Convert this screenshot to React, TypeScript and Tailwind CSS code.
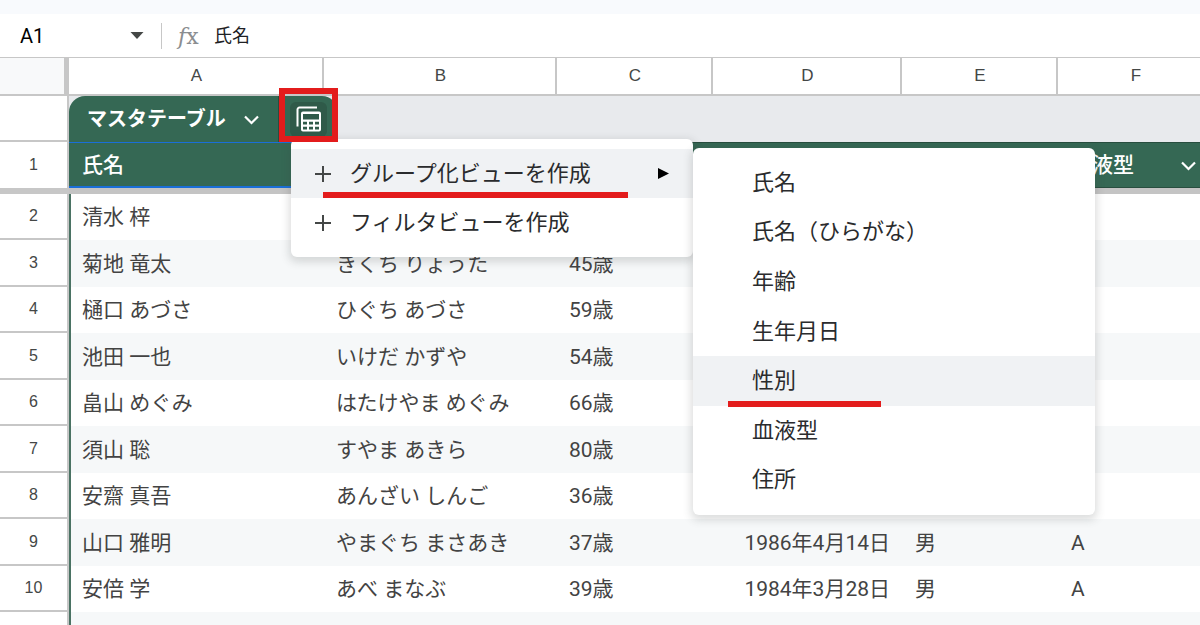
import React from 'react';

const columns = ['A', 'B', 'C', 'D', 'E', 'F'];

const headings = ['氏名', '氏名（ひらがな）', '年齢', '生年月日', '性別', '血液型'];

const rows = [
  { name: '清水 梓', kana: '', age: '', birth: '', sex: '', blood: '' },
  { name: '菊地 竜太', kana: 'きくち りょうた', age: '45歳', birth: '', sex: '', blood: '' },
  { name: '樋口 あづさ', kana: 'ひぐち あづさ', age: '59歳', birth: '', sex: '', blood: '' },
  { name: '池田 一也', kana: 'いけだ かずや', age: '54歳', birth: '', sex: '', blood: '' },
  { name: '畠山 めぐみ', kana: 'はたけやま めぐみ', age: '66歳', birth: '', sex: '', blood: '' },
  { name: '須山 聡', kana: 'すやま あきら', age: '80歳', birth: '', sex: '', blood: '' },
  { name: '安齋 真吾', kana: 'あんざい しんご', age: '36歳', birth: '', sex: '', blood: '' },
  { name: '山口 雅明', kana: 'やまぐち まさあき', age: '37歳', birth: '1986年4月14日', sex: '男', blood: 'A' },
  { name: '安倍 学', kana: 'あべ まなぶ', age: '39歳', birth: '1984年3月28日', sex: '男', blood: 'A' },
  { name: '', kana: '', age: '', birth: '', sex: '', blood: '' },
];

const groupFields = ['氏名', '氏名（ひらがな）', '年齢', '生年月日', '性別', '血液型', '住所'];

const Chevron = () => (
  <svg className="shrink-0 w-[15px] h-[15px]" viewBox="0 0 15 15" fill="none" stroke="currentColor" strokeWidth="2.2">
    <path d="M1 4.5l6.5 6.5L14 4.5" />
  </svg>
);

const Plus = () => (
  <svg className="w-4 h-4" viewBox="0 0 16 16" fill="none" stroke="#444746" strokeWidth="2">
    <path d="M8 0v16M0 8h16" />
  </svg>
);

const TableViewsIcon = () => (
  <svg className="w-[26px] h-[26px]" viewBox="0 0 26 26" fill="currentColor">
    <path d="M1.5 20.5V3.5a2 2 0 0 1 2-2h17.5" fill="none" stroke="currentColor" strokeWidth="2" />
    <path
      fillRule="evenodd"
      d="M7 5.5h16a2 2 0 0 1 2 2v16a2 2 0 0 1-2 2H7a2 2 0 0 1-2-2v-16a2 2 0 0 1 2-2zM7 8v5.5h16V8zM7 15.8v2.8h4v-2.8zM13 15.8v2.8h4v-2.8zM19 15.8v2.8h4v-2.8zM7 20.8v2.8h4v-2.8zM13 20.8v2.8h4v-2.8zM19 20.8v2.8h4v-2.8z"
    />
  </svg>
);

const FormulaBar = () => (
  <div className="flex items-center h-11 border-b border-[#c7c7c7] bg-white">
    <input
      aria-label="名前ボックス"
      defaultValue="A1"
      className="w-[110px] ml-5 text-xl text-black outline-none"
    />
    <button aria-label="名前付き範囲" className="w-[14px] h-6 flex items-center">
      <svg className="w-[14px] h-[7px]" viewBox="0 0 14 7" fill="#444746">
        <path d="M0.5 0h13L7 7z" />
      </svg>
    </button>
    <div className="w-px h-[26px] ml-[17px] bg-[#c7c7c7]" />
    <span className="w-9 ml-4 pt-[2px] font-['DejaVu_Serif',serif] text-[22px] leading-6 text-[#8a8d90]">
      <i>f</i>x
    </span>
    <input
      aria-label="数式バー"
      defaultValue="氏名"
      className="flex-1 min-w-0 text-lg text-[#202124] outline-none"
    />
  </div>
);

const GroupMenu = () => (
  <div
    role="menu"
    className="absolute z-20 left-full -top-px w-[402px] h-[367px] py-[10px] flex flex-col rounded-md bg-white shadow-[0_3px_8px_2px_rgba(60,64,67,0.18)]"
  >
    {groupFields.map((field) => (
      <button
        key={field}
        role="menuitem"
        className={`relative flex-1 flex items-center pl-[59px] text-left ${field === '性別' ? 'bg-[#f0f2f4]' : ''}`}
      >
        {field}
        {field === '性別' && <span className="absolute left-[35px] -bottom-px w-[153px] h-[6px] bg-[#e31c1c]" />}
      </button>
    ))}
  </div>
);

const ViewMenu = () => (
  <div
    role="menu"
    className="absolute z-10 left-[222px] top-[43px] w-[402px] py-[10px] rounded-md bg-white text-[22px] leading-7 font-normal text-[#2a2b2d] shadow-[0_3px_8px_2px_rgba(60,64,67,0.18)]"
  >
    <div className="relative">
      <button role="menuitem" className="w-full h-[49px] flex items-center pl-6 pr-6 bg-[#f0f2f4]">
        <Plus />
        <span className="flex-1 pl-[19px] text-left">グループ化ビューを作成</span>
        <svg className="w-[11px] h-[11px]" viewBox="0 0 11 11" fill="#000">
          <path d="M0 0l11 5.5L0 11z" />
        </svg>
      </button>
      <span className="absolute left-8 bottom-0 w-[305px] h-[6px] bg-[#e31c1c]" />
      <GroupMenu />
    </div>
    <button role="menuitem" className="w-full h-[49px] flex items-center pl-6 pr-6">
      <Plus />
      <span className="flex-1 pl-[19px] text-left">フィルタビューを作成</span>
    </button>
  </div>
);

const TableTab = () => (
  <div className="relative h-[46px]">
    <div className="flex w-[269px] h-[46px] rounded-t-2xl overflow-hidden bg-[#356854] text-white">
      <button className="flex items-center justify-between w-[210px] pl-[18px] pr-[19px] border-r border-[#284e3f] text-xl font-bold">
        マスタテーブル
        <Chevron />
      </button>
      <button aria-label="テーブルビュー" className="m-auto w-[37px] h-[35px] flex items-center justify-center rounded-md bg-[#2f5a49]">
        <TableViewsIcon />
      </button>
    </div>
    <div className="absolute z-20 left-[210px] -top-2 w-[59px] h-[54px] border-[6px] border-[#e31c1c] pointer-events-none" />
    <ViewMenu />
  </div>
);

const rowHead = "p-0 font-['Liberation_Sans'] text-base font-normal text-[#444746] text-center border-r-2 border-b-2 border-[#c7c7c7] bg-white";

const App = () => {
  return (
    <main className="h-screen overflow-hidden bg-white font-['Roboto','Noto_Sans_CJK_JP',sans-serif]">
      <div className="h-[14px] bg-[#f8fafd]" />
      <FormulaBar />

      {/* Sheet */}
      <table className="table-fixed w-full min-w-[1214px] border-separate border-spacing-0">
        <colgroup>
          <col className="w-[69px]" />
          <col className="w-[255px]" />
          <col className="w-[233px]" />
          <col className="w-[156px]" />
          <col className="w-[189px]" />
          <col className="w-[156px]" />
          <col />
        </colgroup>
        <thead>
          <tr className="h-[38px]">
            <td className="p-0 bg-[#f8f9fa] border-r-[5px] border-b-2 border-[#c7c7c7]" />
            {columns.map((letter) => (
              <th
                key={letter}
                scope="col"
                className="p-0 pl-[2px] font-['Liberation_Sans'] text-[17px] font-normal text-[#444746] border-r-2 border-b-2 border-[#c7c7c7]"
              >
                {letter}
              </th>
            ))}
          </tr>
          <tr className="h-[46px]">
            <td className={rowHead} />
            <td colSpan={6} className="p-0 bg-[#e8eaed]">
              <TableTab />
            </td>
          </tr>
          <tr className="h-[52px]">
            <th scope="row" className="p-0 font-['Liberation_Sans'] text-base font-normal text-[#444746] border-r-2 border-b-[6px] border-[#c7c7c7]">1</th>
            {headings.map((heading, i) => (
              <th key={heading} className="p-0 text-left text-[21px] leading-7 font-medium text-white border-b-[6px] border-[#c4c4c4]">
                <div
                  className={`flex items-center justify-between h-[46px] pl-[13px] pr-[18px] bg-[#356854] border-t ${
                    i === 0 ? 'border-b-2 border-[#1a6fd8]' : 'border-b border-[#284e3f]'
                  }`}
                >
                  {heading}
                  <Chevron />
                </div>
              </th>
            ))}
          </tr>
        </thead>
        <tbody className="text-[21px] leading-7 text-[#434343]">
          {rows.map((row, i) => (
            <tr key={i} className={i % 2 ? 'h-[47px] bg-[#f6f8f9]' : 'h-[46px] bg-white'}>
              <th scope="row" className={rowHead}>{row.name && i + 2}</th>
              <td className="p-0 pl-[11px] border-l-2 border-[#4a7263]">{row.name}</td>
              <td className="p-0 pl-3">{row.kana}</td>
              <td className="p-0 pl-3">{row.age}</td>
              <td className="p-0 pr-3 text-right whitespace-nowrap">{row.birth}</td>
              <td className="p-0 pl-[13px]">{row.sex}</td>
              <td className="p-0 pl-[13px]">{row.blood}</td>
            </tr>
          ))}
        </tbody>
      </table>
    </main>
  );
};

export default App;
